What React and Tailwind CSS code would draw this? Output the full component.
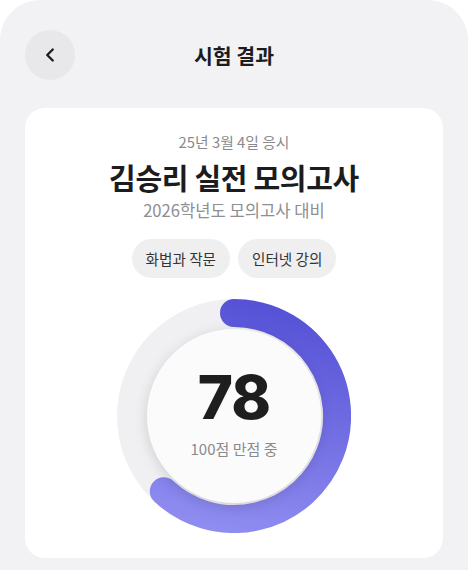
import { ChevronLeft } from 'lucide-react';

const kr = { fontFamily: '"Noto Sans CJK KR", "Noto Sans", sans-serif' };

function ScoreRing({ score }) {
  return (
    <div className="relative w-[234px] h-[234px]">
      <svg width="234" height="234" viewBox="0 0 234 234">
        <defs>
          <linearGradient id="arc" gradientUnits="userSpaceOnUse" x1="140" y1="0" x2="90" y2="234">
            <stop offset="0" stopColor="#5551d6" />
            <stop offset="1" stopColor="#918ef1" />
          </linearGradient>
        </defs>
        <circle cx="117" cy="117" r="102" fill="none" stroke="#f0f0f3" strokeWidth="30" />
        <path
          d="M117 14 A103 103 0 1 1 46.8 192.3"
          fill="none"
          stroke="url(#arc)"
          strokeWidth="28"
          strokeLinecap="round"
        />
      </svg>
      <div className="absolute left-[30px] top-[30px] w-[174px] h-[174px] rounded-full bg-[#fbfbfb] shadow-[0_3px_14px_rgba(0,0,0,0.14)] flex flex-col items-center justify-center">
        <div
          className="text-[60px] leading-none font-extrabold text-[#1e1e1e] tracking-[-1px] mt-[-6px]"
          style={{ fontFamily: 'Inter, sans-serif' }}
        >
          {score}
        </div>
        <div className="mt-[12px] text-[15px] leading-5 text-[#8a8a8d]" style={kr}>
          100점 만점 중
        </div>
      </div>
    </div>
  );
}

export default function App() {
  return (
    <div className="w-[468px] h-[570px] bg-white overflow-hidden">
      <div className="h-full bg-[#f2f2f5] rounded-t-[40px] px-[25px] pt-[30px]" style={kr}>
        <div className="relative flex items-center h-[50px]">
          <button className="w-[50px] h-[50px] rounded-full bg-[#e8e8eb] flex items-center justify-center">
            <ChevronLeft size={22} strokeWidth={2.6} color="#1c1c1e" />
          </button>
          <div className="absolute inset-0 flex items-center justify-center pointer-events-none">
            <span className="text-[20.5px] font-bold text-[#1c1c1e]">시험 결과</span>
          </div>
        </div>

        <div className="mt-[28px] bg-white rounded-[20px] pt-[24px] pb-[25px] flex flex-col items-center">
          <div className="text-[14.8px] leading-5 text-[#8a8a8e]">25년 3월 4일 응시</div>
          <div className="mt-[7px] text-[29px] leading-[36px] font-bold text-[#1c1c1e] tracking-[-0.3px]">
            김승리 실전 모의고사
          </div>
          <div className="mt-[4px] text-[16.6px] leading-[22px] text-[#8e8e93]">2026학년도 모의고사 대비</div>
          <div className="mt-[18px] flex gap-2">
            <span className="h-[39px] px-[14px] rounded-full bg-[#efeff0] text-[14.6px] text-[#333336] flex items-center">
              화법과 작문
            </span>
            <span className="h-[39px] px-[14px] rounded-full bg-[#efeff0] text-[14.6px] text-[#333336] flex items-center">
              인터넷 강의
            </span>
          </div>
          <div className="mt-[21px]">
            <ScoreRing score={78} />
          </div>
        </div>
      </div>
    </div>
  );
}
